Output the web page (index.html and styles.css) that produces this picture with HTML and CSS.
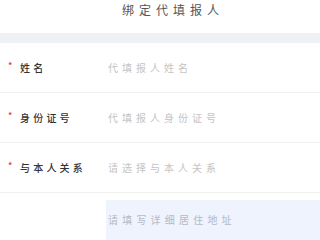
FILE: index.html
```html
<!DOCTYPE html>
<html lang="zh">
<head>
<meta charset="utf-8">
<link rel="stylesheet" href="styles.css">
</head>
<body>
<div class="page">
  <header class="title">绑定代填报人</header>
  <div class="band"></div>
  <div class="row">
    <div class="label"><span class="star">*</span>姓名</div>
    <div class="ph">代填报人姓名</div>
  </div>
  <div class="row">
    <div class="label"><span class="star">*</span>身份证号</div>
    <div class="ph">代填报人身份证号</div>
  </div>
  <div class="row">
    <div class="label"><span class="star">*</span>与本人关系</div>
    <div class="ph">请选择与本人关系</div>
  </div>
  <div class="row last">
    <div class="label"></div>
    <div class="area"><span class="ph">请填写详细居住地址</span></div>
  </div>
</div>
</body>
</html>
```
FILE: styles.css
```css
html, body { margin: 0; padding: 0; background: #fff; }
body { font-family: "Noto Sans CJK SC", "Noto Sans", sans-serif; width: 320px; height: 240px; overflow: hidden; }
.page { display: flex; flex-direction: column; height: 240px; overflow: hidden; }
.title { height: 33px; display: flex; align-items: flex-start; justify-content: center; padding-left: 26px; box-sizing: border-box; padding-top: 2px; font-size: 12px; letter-spacing: 5px; color: #555; line-height: 16px; }
.band { height: 10px; background: #eef2f7; }
.row { height: 50px; flex: none; display: flex; align-items: center; border-bottom: 1px solid #f1f1f1; box-sizing: border-box; }
.row.last { border-bottom: none; height: 47px; align-items: stretch; padding-top: 7px; }
.label { width: 106px; display: flex; align-items: center; font-size: 10px; letter-spacing: 3.2px; color: #333; font-weight: 500; padding-left: 8px; box-sizing: border-box; }
.star { color: #e33; font-size: 9px; width: 12px; letter-spacing: 0; position: relative; top: -2px; }
.ph { font-size: 10px; letter-spacing: 4px; color: #c4c4c4; padding-left: 2px; }
.area { flex: 1; background: #eef3fd; padding-top: 5px; box-sizing: border-box; }
.area .ph { color: #b5b9c4; letter-spacing: 4.2px; }
```
